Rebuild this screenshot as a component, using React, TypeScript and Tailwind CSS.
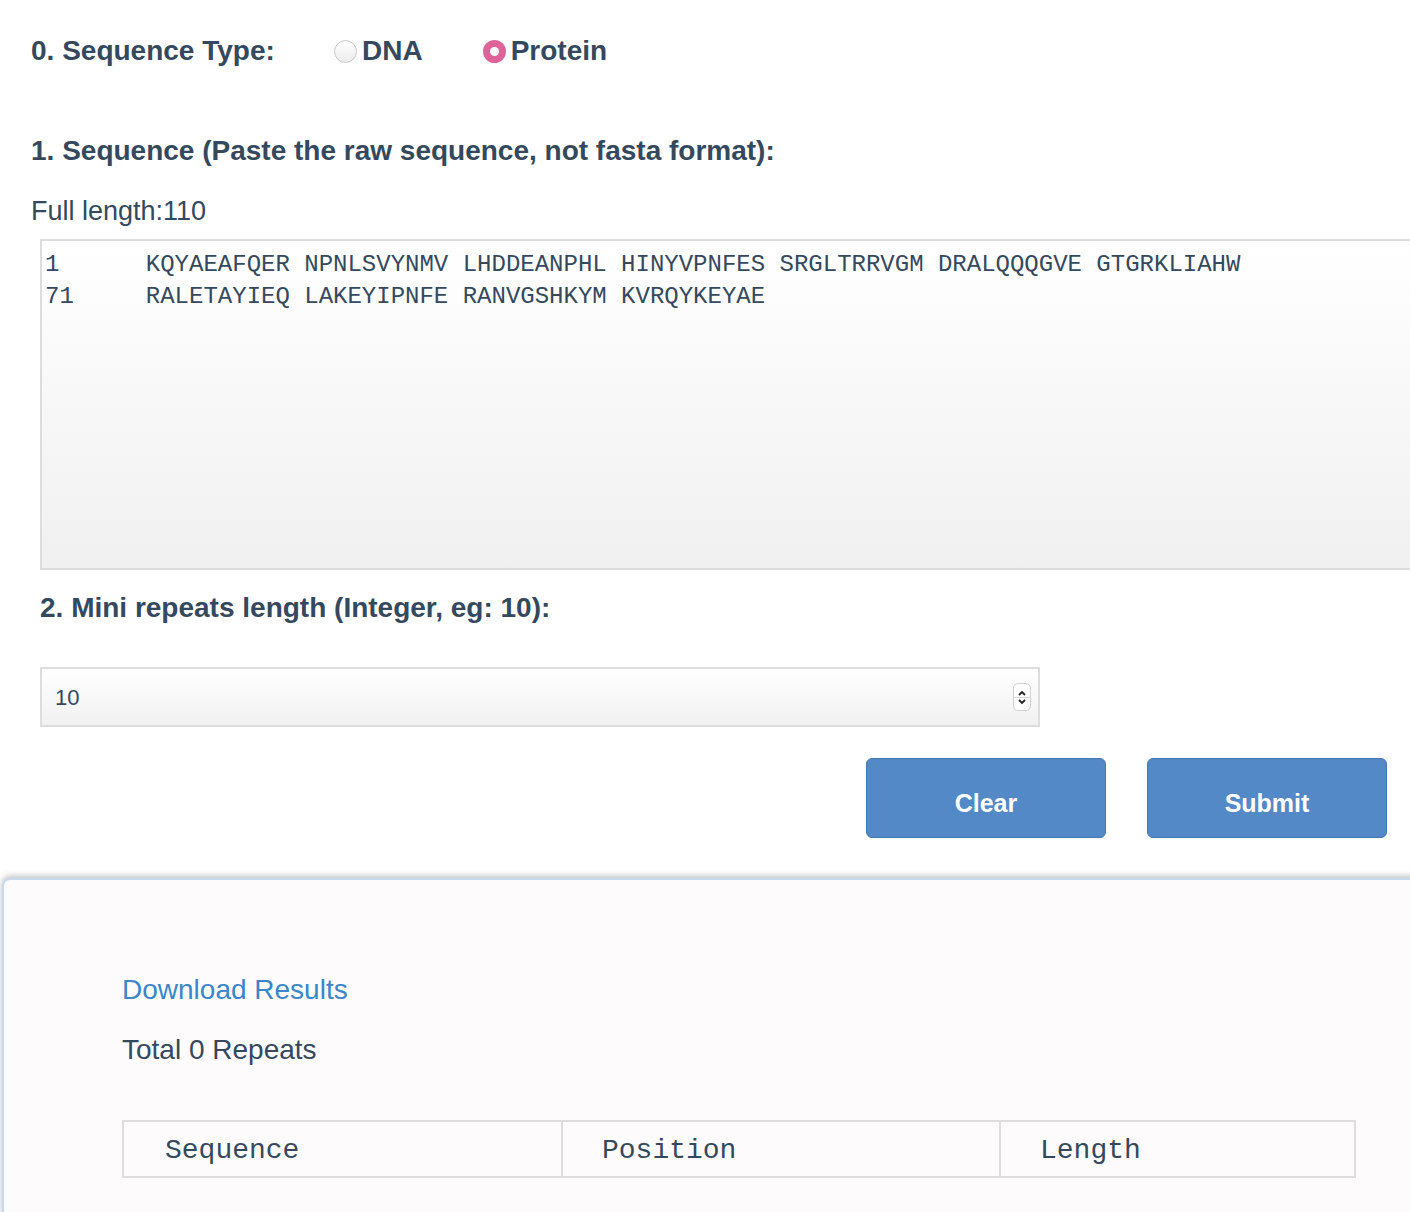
import React from "react";

const sans = { fontFamily: '"Liberation Sans", Arial, sans-serif' };
const mono = { fontFamily: '"Liberation Mono", "Courier New", monospace' };

export default function App() {
  return (
    <div className="min-h-[1212px] w-[1410px] overflow-hidden bg-white text-[#34495e]" style={sans}>
      <div className="pl-[31px] pt-[34px]">
        <div className="flex h-[34px] items-center text-[28px] font-bold">
          <span className="w-[303px]">0. Sequence Type:</span>
          <label className="flex items-center">
            <span className="mr-[5px] h-[23px] w-[23px] rounded-full border border-[#c8c8c8] bg-gradient-to-b from-white to-[#ececec]" />
            <span>DNA</span>
          </label>
          <label className="ml-[60px] flex items-center">
            <span className="mr-[5px] flex h-[23px] w-[23px] items-center justify-center rounded-full bg-[#dd6399]">
              <span className="h-[9px] w-[9px] rounded-full bg-white" />
            </span>
            <span>Protein</span>
          </label>
        </div>
        <div className="mt-[66px] h-[34px] text-[28px] font-bold leading-[34px]">
          1. Sequence (Paste the raw sequence, not fasta format):
        </div>
        <div className="mt-[28px] h-[30px] text-[27px] leading-[30px]">Full length:110</div>
      </div>
      <div className="ml-[40px] mt-[13px] h-[331px] w-[1400px] border-2 border-[#dddddd] bg-gradient-to-b from-white to-[#f0f0f0] pl-[3px] pt-[8px]">
        <pre className="text-[24px] leading-[32px] text-[#34495e]" style={mono}>
{`1      KQYAEAFQER NPNLSVYNMV LHDDEANPHL HINYVPNFES SRGLTRRVGM DRALQQQGVE GTGRKLIAHW
71     RALETAYIEQ LAKEYIPNFE RANVGSHKYM KVRQYKEYAE`}
        </pre>
      </div>
      <div className="ml-[40px] mt-[21px] h-[34px] text-[28px] font-bold leading-[34px]">
        2. Mini repeats length (Integer, eg: 10):
      </div>
      <div className="ml-[40px] mt-[42px] flex h-[60px] w-[1000px] items-center justify-between border-2 border-[#dddddd] bg-gradient-to-b from-white to-[#f1f1f1] pl-[13px] pr-[7px]">
        <span className="text-[22px]">10</span>
        <span className="flex h-[28px] w-[18px] flex-col items-center justify-center rounded-[5px] border border-[#d0d0d0] bg-white">
          <svg width="10" height="8" viewBox="0 0 10 8"><path d="M2 6 L5 3 L8 6" fill="none" stroke="#222" strokeWidth="1.8" /></svg>
          <span className="h-px w-full bg-[#d8d8d8]" />
          <svg width="10" height="8" viewBox="0 0 10 8"><path d="M2 2 L5 5 L8 2" fill="none" stroke="#222" strokeWidth="1.8" /></svg>
        </span>
      </div>
      <div className="mt-[31px] flex gap-[41px] pl-[866px]">
        <button className="h-[80px] w-[240px] rounded-[6px] border border-[#4677b5] bg-[#5289c6] pt-[12px] text-[25px] font-bold text-white" style={sans}>
          Clear
        </button>
        <button className="h-[80px] w-[240px] rounded-[6px] border border-[#4677b5] bg-[#5289c6] pt-[12px] text-[25px] font-bold text-white" style={sans}>
          Submit
        </button>
      </div>
      <div className="ml-[2px] mt-[40px] h-[340px] w-[1420px] rounded-tl-[8px] border-2 border-[#c7d9ef] bg-[#fdfbfc] pl-[118px] pt-[92px] shadow-[0_-2px_6px_rgba(0,0,0,0.25)]">
        <div className="h-[36px] text-[28px] leading-[36px] text-[#3a86c8]">Download Results</div>
        <div className="mt-[24px] h-[36px] text-[28px] leading-[36px]">Total 0 Repeats</div>
        <div className="mt-[52px] flex h-[58px] w-[1234px] border-2 border-[#dddddd]">
          <div className="flex w-[437px] items-center pl-[41px] pt-[3px] text-[28px]" style={mono}>Sequence</div>
          <div className="flex w-[438px] items-center border-l-2 border-[#dddddd] pl-[39px] pt-[3px] text-[28px]" style={mono}>Position</div>
          <div className="flex flex-1 items-center border-l-2 border-[#dddddd] pl-[39px] pt-[3px] text-[28px]" style={mono}>Length</div>
        </div>
      </div>
    </div>
  );
}
